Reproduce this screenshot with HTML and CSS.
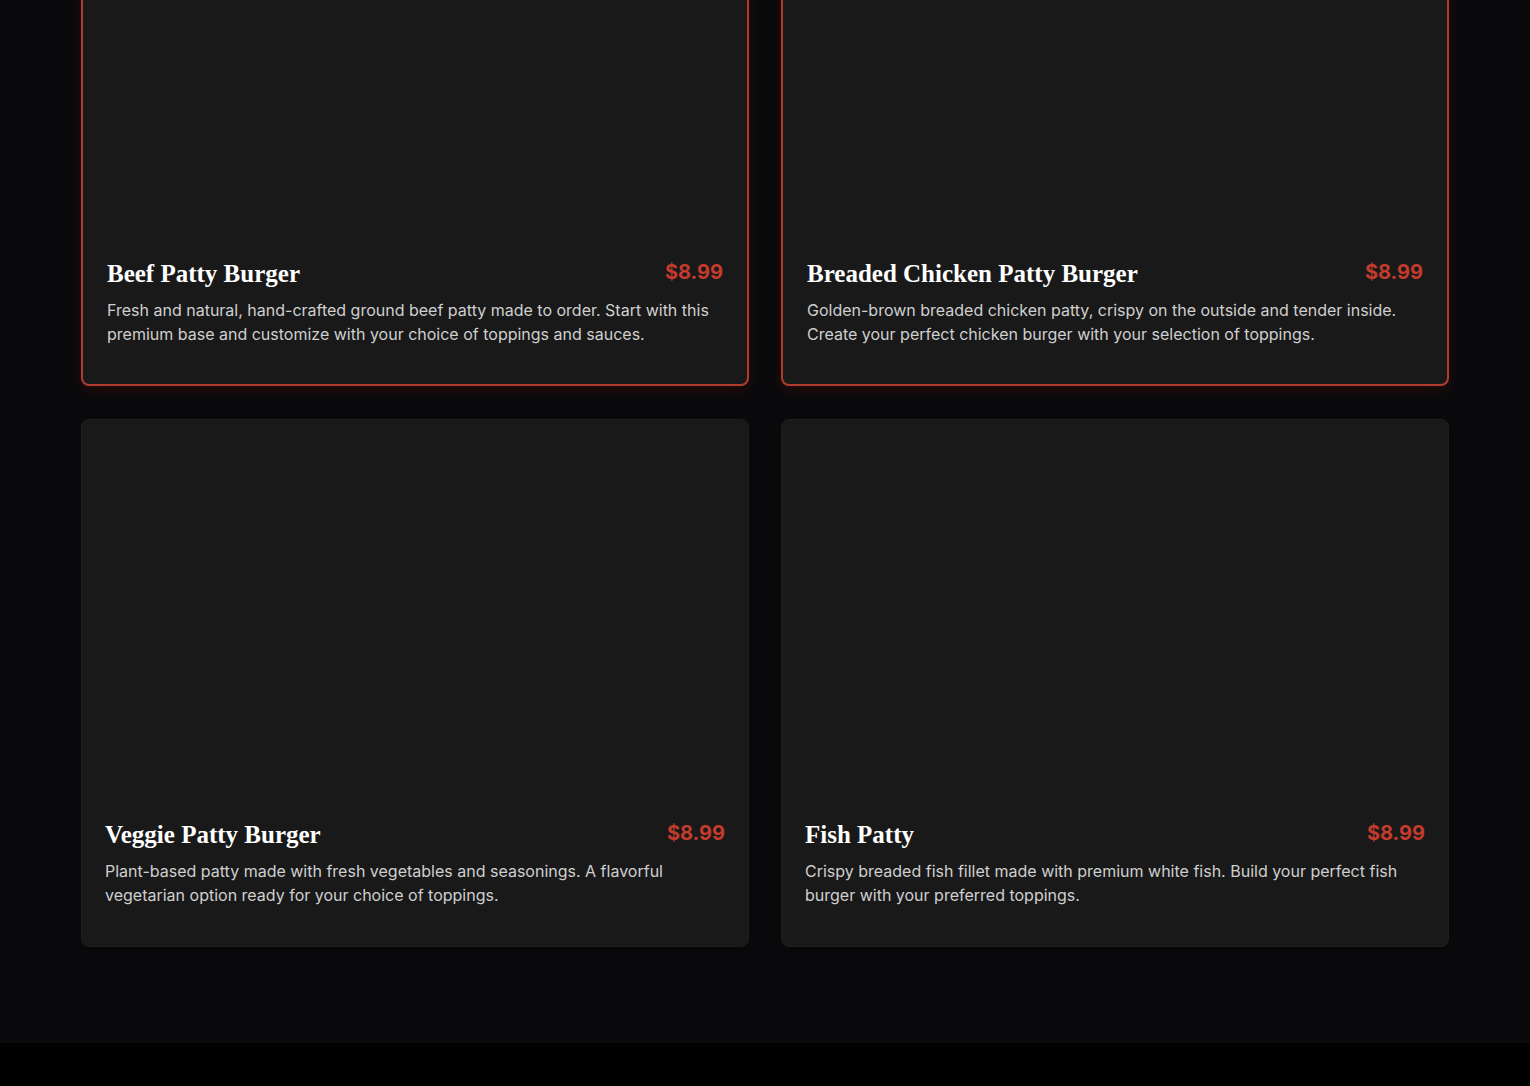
FILE: index.html
```html
<!DOCTYPE html>
<html lang="en">
<head>
<meta charset="utf-8">
<title>Patties</title>
<link rel="stylesheet" href="styles.css">
</head>
<body>
    <section class="menu">
        <div class="container">
            <div class="grid">
                <div class="card active">
                    <div class="card-img"></div>
                    <div class="card-body">
                        <div class="card-head">
                            <h3>Beef Patty Burger</h3>
                            <span class="price">$8.99</span>
                        </div>
                        <p>Fresh and natural, hand-crafted ground beef patty made to order. Start with this premium base and customize with your choice of toppings and sauces.</p>
                    </div>
                </div>
                <div class="card active">
                    <div class="card-img"></div>
                    <div class="card-body">
                        <div class="card-head">
                            <h3>Breaded Chicken Patty Burger</h3>
                            <span class="price">$8.99</span>
                        </div>
                        <p>Golden-brown breaded chicken patty, crispy on the outside and tender inside. Create your perfect chicken burger with your selection of toppings.</p>
                    </div>
                </div>
                <div class="card">
                    <div class="card-img"></div>
                    <div class="card-body">
                        <div class="card-head">
                            <h3>Veggie Patty Burger</h3>
                            <span class="price">$8.99</span>
                        </div>
                        <p>Plant-based patty made with fresh vegetables and seasonings. A flavorful vegetarian option ready for your choice of toppings.</p>
                    </div>
                </div>
                <div class="card">
                    <div class="card-img"></div>
                    <div class="card-body">
                        <div class="card-head">
                            <h3>Fish Patty</h3>
                            <span class="price">$8.99</span>
                        </div>
                        <p>Crispy breaded fish fillet made with premium white fish. Build your perfect fish burger with your preferred toppings.</p>
                    </div>
                </div>
            </div>
        </div>
    </section>
    <footer class="footer"></footer>
</body>
</html>
```
FILE: styles.css
```css
html, body {
    margin: 0;
    padding: 0;
}
body {
    font-family: Inter, "Noto Sans", sans-serif;
    background-color: #0a0a0c;
    color: #fff;
}
.menu {
    margin-top: -141px;
    padding-bottom: 96px;
}
.container {
    max-width: 1400px;
    margin: 0 auto;
    padding: 0 16px;
    box-sizing: border-box;
}
.grid {
    display: grid;
    grid-template-columns: 1fr 1fr;
    gap: 32px;
}
.card {
    background-color: #191919;
    border: 1px solid #1f1f20;
    border-radius: 8px;
    overflow: hidden;
    box-shadow: 0 4px 10px rgba(0, 0, 0, 0.35);
}
.card.active {
    border: 2px solid #b13c2e;
    transform: translateY(-1px);
    box-shadow: 0 4px 12px rgba(120, 20, 10, 0.25);
}
.card-img {
    height: 375px;
    background-color: #191919;
}
.card.active .card-img {
    height: 374px;
}
.card-body {
    padding: 24px 23px 39px;
}
.card.active .card-body {
    padding: 24px 24px 38px;
}
.card-head {
    display: flex;
    justify-content: space-between;
    align-items: flex-start;
    margin-bottom: 8px;
}
.card-head h3 {
    margin: 0;
    font-family: "Liberation Serif", "DejaVu Serif", serif;
    font-weight: bold;
    font-size: 25px;
    line-height: 32px;
    color: #fff;
}
.price {
    font-weight: 700;
    font-size: 20px;
    line-height: 28px;
    color: #c23b2c;
}
.card p {
    margin: 0;
    font-size: 16px;
    line-height: 24px;
    color: #cfcfcf;
}
.footer {
    background-color: #000;
    height: 60px;
}
```
